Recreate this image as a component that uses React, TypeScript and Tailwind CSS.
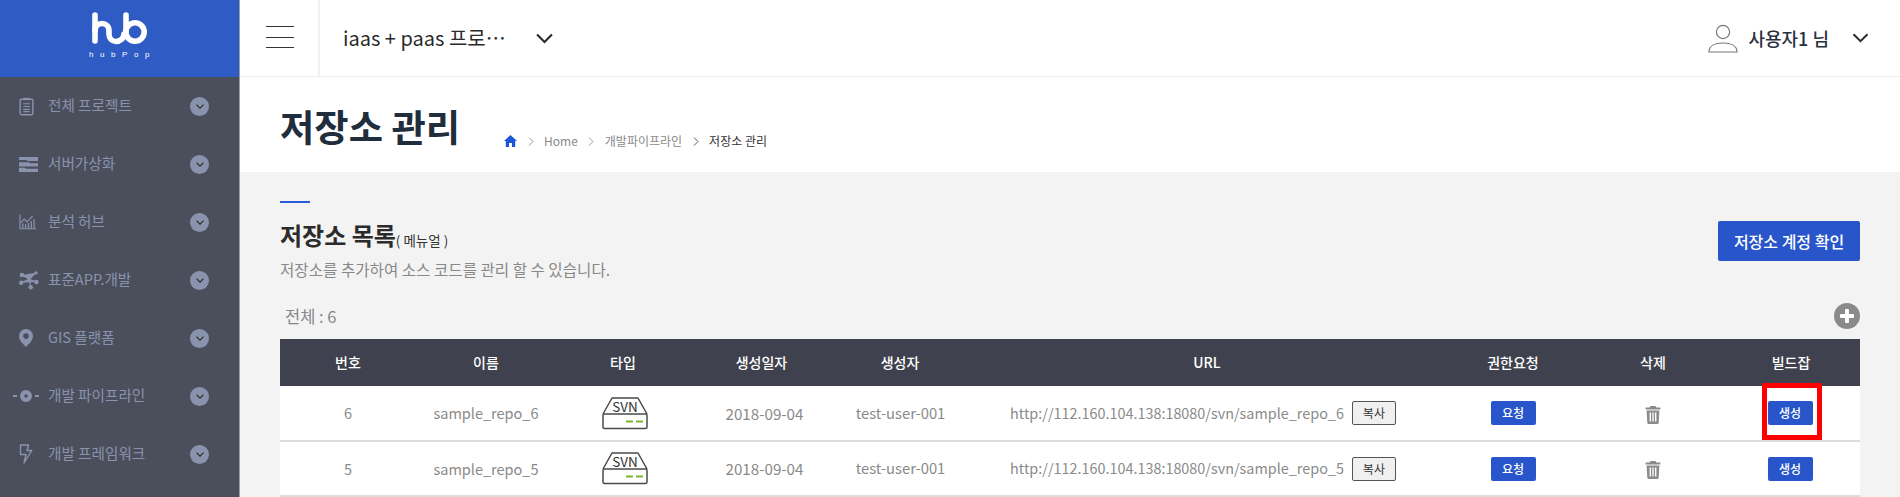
import React from "react";

const FONT = "font-['Noto_Sans_CJK_KR','Noto_Sans',sans-serif]";

const ClipIcon = () => (
  <svg width="15" height="19" viewBox="0 0 16 20" fill="none" stroke="#8a93ad" strokeWidth="1.5">
    <rect x="1.2" y="2.2" width="13.6" height="16.6" rx="1.5" />
    <rect x="4.5" y="0.8" width="7" height="2.4" fill="#8a93ad" stroke="none" />
    <path d="M4.5 7h7M4.5 10h7M4.5 13h7M4.5 15.5h7" strokeWidth="1.2" />
  </svg>
);
const ServerIcon = () => (
  <svg width="19" height="15" viewBox="0 0 19 15" fill="#8a93ad">
    <path d="M0 0h19v4H8.5L7.5 3H0z" />
    <path d="M0 5.2h10l1 1h8v3.4H0z" />
    <path d="M0 10.8h6l1 1h12V15H0z" />
  </svg>
);
const ChartIcon = () => (
  <svg width="17" height="16" viewBox="0 0 18 16" fill="none" stroke="#8a93ad" strokeWidth="1.2">
    <path d="M1 0v15.2h17" />
    <path d="M1.5 9 5.5 5l3 3 6-6.5" />
    <path d="M4 15V9.5M7 15v-4.5M10 15V9M13 15V7M16 15V5" strokeWidth="1.4" />
  </svg>
);
const NetIcon = () => (
  <svg width="20" height="19" viewBox="0 0 20 19" fill="#8a93ad" stroke="#8a93ad">
    <path d="M2.7 4 10.3 8.3 17 1.7M1.5 11.7 10.3 8.3 17.7 11M10.3 8.3 11.7 16" strokeWidth="1.1" />
    <circle cx="2.9" cy="4" r="2.3" stroke="none" />
    <circle cx="17" cy="1.9" r="1.7" stroke="none" />
    <circle cx="2.2" cy="11.7" r="2.2" stroke="none" />
    <circle cx="17.4" cy="11" r="2.2" stroke="none" />
    <circle cx="11.7" cy="16.3" r="2.2" stroke="none" />
    <circle cx="10.3" cy="8.3" r="1.6" stroke="none" />
  </svg>
);
const PinIcon = () => (
  <svg width="14" height="18" viewBox="0 0 14 18">
    <path fillRule="evenodd" fill="#8a93ad" d="M7 0a7 7 0 0 1 7 7c0 4-4 8-7 11C4 15 0 11 0 7a7 7 0 0 1 7-7zm0 4.3a2.8 2.8 0 1 0 0 5.6 2.8 2.8 0 0 0 0-5.6z" />
  </svg>
);
const PipeIcon = () => (
  <svg width="26" height="14" viewBox="0 0 26 14" fill="#8a93ad">
    <rect x="0" y="6" width="4" height="2" />
    <rect x="22" y="6" width="4" height="2" />
    <path fillRule="evenodd" d="M13 1a6 6 0 1 1 0 12 6 6 0 0 1 0-12zm0 4.2a1.8 1.8 0 1 0 0 3.6 1.8 1.8 0 0 0 0-3.6z" />
  </svg>
);
const BoltIcon = () => (
  <svg width="14" height="20" viewBox="0 0 14 20" fill="none" stroke="#8a93ad" strokeWidth="1.4" strokeLinejoin="round">
    <path d="M1.5 1h8L8 6.5h4.8L5 19l2-8.5H1.5z" />
  </svg>
);

const menu: [React.ReactNode, string, string][] = [
  [<ClipIcon />, "전체 프로젝트", ""],
  [<ServerIcon />, "서버가상화", ""],
  [<ChartIcon />, "분석 허브", ""],
  [<NetIcon />, "표준APP.개발", ""],
  [<PinIcon />, "GIS 플랫폼", ""],
  [<PipeIcon />, "개발 파이프라인", "-ml-[6px]"],
  [<BoltIcon />, "개발 프레임워크", ""],
];

const Chevron = ({ cls, w = 2 }: { cls: string; w?: number }) => (
  <svg className={cls} viewBox="0 0 16 10" fill="none" stroke="#2b2b2b" strokeWidth={w}>
    <path d="M1 1.2 8 8.2l7-7" />
  </svg>
);

const Sidebar = () => (
  <aside className="w-[239px] shrink-0 bg-[#4b4f5c] border-r border-[#9a9da6] box-content flex flex-col">
    <div className="h-[77px] bg-[#2f5bc4] flex flex-col items-center pt-[12px]">
      <svg width="56" height="33" viewBox="0 0 56 33" fill="none" stroke="#fff" strokeWidth="5.6" strokeLinecap="round">
        <path d="M3 3v26" />
        <path d="M3 19c0-5 3-7.5 7-7.5s7 2.5 7 7.5v3c0 4.5 3 7.5 7 7.5s8-3 8-7.5" />
        <path d="M34 3v17" />
        <circle cx="43" cy="20" r="9.2" />
      </svg>
      <span className="mt-[5px] text-[8px] leading-[10px] tracking-[6.6px] text-white font-['Liberation_Sans',sans-serif] pl-[6px]">hubPop</span>
    </div>
    {menu.map(([icon, label, offset]) => (
      <div key={label} className="h-[58px] flex items-center pl-[19px]">
        <span className="w-[29px] flex items-center">
          <span className={`block ${offset}`}>{icon}</span>
        </span>
        <span className="text-[14.6px] leading-[20px] mb-[2px] text-[#8a93ad] w-[142px]">{label}</span>
        <span className="w-[19px] h-[19px] rounded-full bg-[#8a93ad] flex items-center justify-center">
          <Chevron cls="w-[8px] h-[5px]" w={2.4} />
        </span>
      </div>
    ))}
  </aside>
);

const TopBar = () => (
  <header className="h-[77px] shrink-0 bg-white border-b border-[#eeeeee] flex items-stretch">
    <div className="w-[80px] border-r-2 border-[#f2f2f2] flex flex-col gap-[9.5px] pl-[26px] pt-[26px]">
      <span className="block w-[28px] h-px bg-[#333]" />
      <span className="block w-[28px] h-px bg-[#333]" />
      <span className="block w-[28px] h-px bg-[#333]" />
    </div>
    <div className="flex items-center pl-[23px] flex-1">
      <span className="w-[193px] whitespace-nowrap text-[20px] text-[#2b2b2b] leading-[28px]">iaas + paas 프로…</span>
      <Chevron cls="w-[17px] h-[11px]" />
    </div>
    <div className="flex items-center pr-[31px]">
      <svg width="30" height="30" viewBox="0 0 30 30" fill="none" stroke="#777" strokeWidth="1.2" className="mb-[1px]">
        <circle cx="15" cy="9" r="6.6" />
        <path d="M1 29c0-6 6-9 14-9s14 3 14 9z" />
      </svg>
      <span className="ml-[10px] text-[18px] font-medium text-[#2b3040]">사용자1 님</span>
      <Chevron cls="w-[17px] h-[10px] ml-[23px]" />
    </div>
  </header>
);

const Sep = ({ dark }: { dark?: boolean }) => (
  <svg width="6" height="9" viewBox="0 0 6 9" fill="none" stroke={dark ? "#555" : "#999"} strokeWidth="1" className="mx-[10.5px]">
    <path d="M1 .5 5 4.5 1 8.5" />
  </svg>
);

const Breadcrumb = () => (
  <div className="flex items-center text-[12px] leading-[18px] text-[#8a8a8a] ml-[44px] mt-[34px]">
    <svg width="13" height="12" viewBox="0 0 13 12" fill="#1d55d6">
      <path d="M6.5 0 13 6h-1.8v6H8V8H5v4H1.8V6H0z" />
    </svg>
    <Sep />
    <span>Home</span>
    <Sep />
    <span>개발파이프라인</span>
    <Sep dark />
    <span className="text-[#333]">저장소 관리</span>
  </div>
);

const SvnIcon = () => (
  <svg width="46" height="33" viewBox="0 0 46 33" fill="none" stroke="#4a4a4a" strokeWidth="1.5" className="inline-block align-middle">
    <path d="M1 17 10 1h26l9 16" strokeLinejoin="round" />
    <rect x="1" y="17" width="44" height="14.5" rx="1.5" />
    <text x="23" y="14.5" textAnchor="middle" fontSize="13.5" fill="#333" stroke="none" fontFamily="'Noto Sans CJK KR',sans-serif">SVN</text>
    <path d="M24 24.5h7M34 24.5h7" stroke="#7cb82f" strokeWidth="2.2" />
  </svg>
);

const TrashIcon = () => (
  <svg width="16" height="18" viewBox="0 0 16 18" fill="#8a8a8a" className="inline-block">
    <path d="M5.5 0h5l.8 1.6H15.4v2H.6v-2h4.1z" />
    <path fillRule="evenodd" d="M1.6 4.5h12.8l-.7 12a1.5 1.5 0 0 1-1.5 1.5H3.8a1.5 1.5 0 0 1-1.5-1.5zM4.6 6.5v9h1.4v-9zm2.7 0v9h1.4v-9zm2.7 0v9h1.4v-9z" />
  </svg>
);

const BlueBtn = ({ label }: { label: string }) => (
  <button className="block w-[45px] h-[24px] rounded-[2px] bg-[#2855c9] text-white text-[12px] font-medium">{label}</button>
);

const rows = [
  { n: 6, boxed: true },
  { n: 5, boxed: false },
];

const headers = ["번호", "이름", "타입", "생성일자", "생성자", "URL", "권한요청", "삭제", "빌드잡"];
const widths = ["w-[136px]", "w-[140px]", "w-[134px]", "w-[146px]", "w-[128px]", "w-[486px]", "w-[126px]", "w-[154px]", "w-[130px]"];
const pads = ["", "", "", "pr-[3px]", "", "", "", "", "pr-[8px]"];

const RepoTable = () => (
  <table className="w-[1580px] table-fixed border-collapse text-[14px]">
    <colgroup>
      {widths.map((w, i) => (
        <col key={i} className={w} />
      ))}
    </colgroup>
    <thead>
      <tr className="h-[47px] bg-[#3f424e] text-white">
        {headers.map((h, i) => (
          <th key={h} className={`font-medium text-[14px] text-center ${pads[i]}`}>{h}</th>
        ))}
      </tr>
    </thead>
    <tbody className="bg-white text-[#8a8a8a] text-center">
      {rows.map((r) => (
        <tr key={r.n} className="h-[55px] border-b-2 border-[#dddddd]">
          <td className="text-[14.5px]">{r.n}</td>
          <td className="text-[14.5px]">sample_repo_{r.n}</td>
          <td className="pl-[4px]"><SvnIcon /></td>
          <td className="text-[15.2px] pl-[3px]">2018-09-04</td>
          <td className="text-[14.8px] pl-[1px]">test-user-001</td>
          <td className="pr-[8px]">
            <span className="text-[14.4px] align-middle">http://112.160.104.138:18080/svn/sample_repo_{r.n}</span>
            <button className="ml-[8px] w-[44px] h-[24px] rounded-[2px] border border-[#555] bg-[#f0f0f0] text-[#333] text-[12px] align-middle">복사</button>
          </td>
          <td><span className="inline-block align-middle"><BlueBtn label="요청" /></span></td>
          <td><TrashIcon /></td>
          <td className="pr-[10px]">
            <span className="relative inline-block align-middle">
              <BlueBtn label="생성" />
              {r.boxed && (
                <span className="absolute -left-[6px] -right-[9px] -top-[18px] -bottom-[15px] border-[5px] border-[#ff0000]" />
              )}
            </span>
          </td>
        </tr>
      ))}
    </tbody>
  </table>
);

export default function App() {
  return (
    <div className={`h-[497px] w-[1900px] overflow-hidden flex bg-[#f3f3f3] ${FONT}`}>
      <Sidebar />
      <main className="flex-1 flex flex-col min-w-0">
        <TopBar />
        <div className="h-[95px] shrink-0 bg-white flex items-start pl-[40px] pt-[21px]">
          <h1 className="text-[37.3px] font-bold leading-[56px] text-[#1f2d3d]">저장소 관리</h1>
          <Breadcrumb />
        </div>
        <div className="flex-1 pl-[40px] pr-[40px] pt-[29px]">
          <div className="w-[30px] h-[2px] bg-[#2a5bd7]" />
          <div className="flex justify-between items-start">
            <div className="pt-[15px]">
              <div className="flex items-end leading-[34px]">
                <h2 className="text-[24px] font-bold text-[#2b2b2b]">저장소 목록</h2>
                <span className="text-[13.5px] leading-[24px] text-[#333]">( 메뉴얼 )</span>
              </div>
              <p className="text-[15.6px] leading-[24px] text-[#888] mt-[5px]">저장소를 추가하여 소스 코드를 관리 할 수 있습니다.</p>
            </div>
            <button className="mt-[18px] w-[142px] h-[40px] rounded-[2px] bg-[#2855c9] text-white text-[16px] font-medium">저장소 계정 확인</button>
          </div>
          <div className="flex justify-between items-center h-[26px] mt-[22px] mb-[10px] pl-[5px]">
            <span className="text-[16.5px] text-[#888]">전체 : 6</span>
            <span className="relative w-[26px] h-[26px] rounded-full bg-[#8a8a8a]">
              <span className="absolute left-[6px] top-[11px] w-[14px] h-[4px] rounded-[1px] bg-white" />
              <span className="absolute left-[11px] top-[6px] w-[4px] h-[14px] rounded-[1px] bg-white" />
            </span>
          </div>
          <RepoTable />
        </div>
      </main>
    </div>
  );
}
